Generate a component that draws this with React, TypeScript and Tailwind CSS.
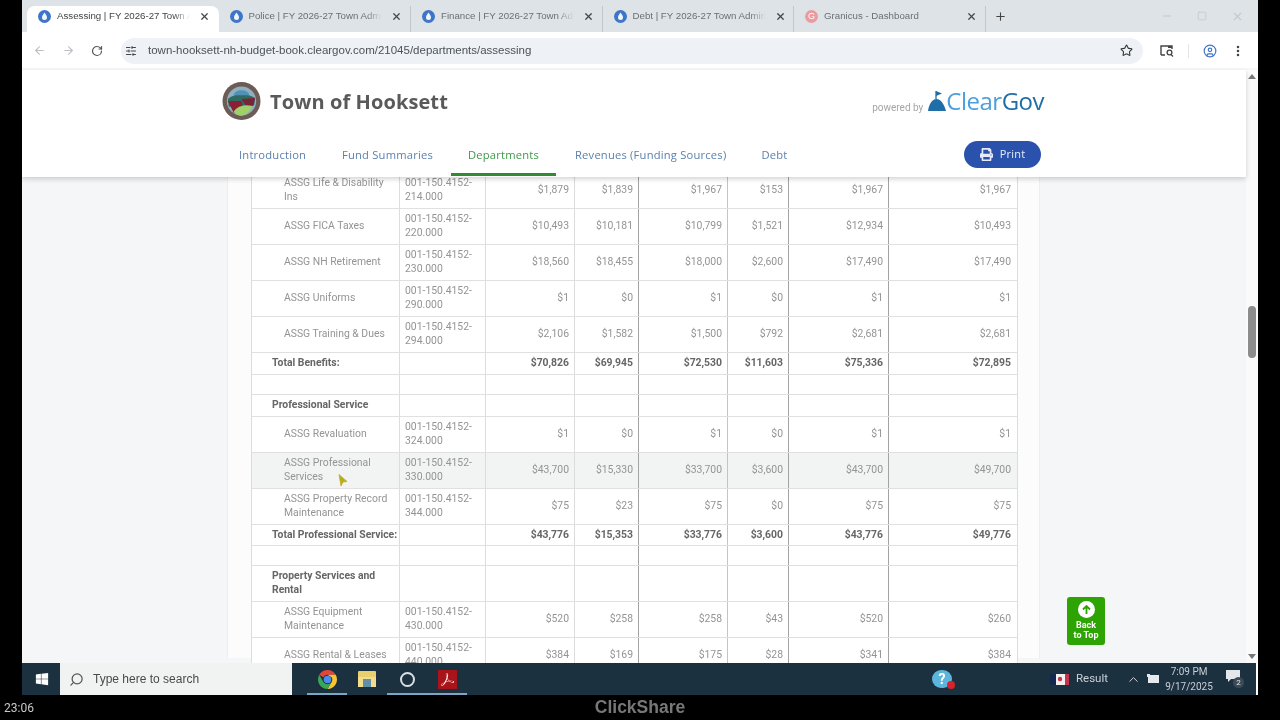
import React from "react";
import { ArrowLeft, ArrowRight, ChevronUp, CircleUser, Minus, MoreVertical, Plus, RotateCw, Search, SlidersHorizontal, Square, Star, X } from "lucide-react";
import { FaPrint, FaWindows } from "react-icons/fa";
import { SiAdobeacrobatreader } from "react-icons/si";

const tabs = [
  { title: "Assessing | FY 2026-27 Town Administrator", active: true },
  { title: "Police | FY 2026-27 Town Administrator" },
  { title: "Finance | FY 2026-27 Town Administrator" },
  { title: "Debt | FY 2026-27 Town Administrator" },
  { title: "Granicus - Dashboard", granicus: true },
];

type Row = {
  h: string;
  label?: string;
  code?: string;
  values?: string[];
  kind?: "item" | "total" | "heading" | "blank";
  hover?: boolean;
};

const rows: Row[] = [
  { h: "h-[36px]", label: "ASSG Life & Disability Ins", code: "214.000", values: ["$1,879", "$1,839", "$1,967", "$153", "$1,967", "$1,967"] },
  { h: "h-[36px]", label: "ASSG FICA Taxes", code: "220.000", values: ["$10,493", "$10,181", "$10,799", "$1,521", "$12,934", "$10,493"] },
  { h: "h-[36px]", label: "ASSG NH Retirement", code: "230.000", values: ["$18,560", "$18,455", "$18,000", "$2,600", "$17,490", "$17,490"] },
  { h: "h-[36px]", label: "ASSG Uniforms", code: "290.000", values: ["$1", "$0", "$1", "$0", "$1", "$1"] },
  { h: "h-[36px]", label: "ASSG Training & Dues", code: "294.000", values: ["$2,106", "$1,582", "$1,500", "$792", "$2,681", "$2,681"] },
  { h: "h-[22px]", kind: "total", label: "Total Benefits:", values: ["$70,826", "$69,945", "$72,530", "$11,603", "$75,336", "$72,895"] },
  { h: "h-[20px]", kind: "blank" },
  { h: "h-[22px]", kind: "heading", label: "Professional Service" },
  { h: "h-[36px]", label: "ASSG Revaluation", code: "324.000", values: ["$1", "$0", "$1", "$0", "$1", "$1"] },
  { h: "h-[36px]", label: "ASSG Professional Services", code: "330.000", hover: true, values: ["$43,700", "$15,330", "$33,700", "$3,600", "$43,700", "$49,700"] },
  { h: "h-[36px]", label: "ASSG Property Record Maintenance", code: "344.000", values: ["$75", "$23", "$75", "$0", "$75", "$75"] },
  { h: "h-[21px]", kind: "total", label: "Total Professional Service:", values: ["$43,776", "$15,353", "$33,776", "$3,600", "$43,776", "$49,776"] },
  { h: "h-[20px]", kind: "blank" },
  { h: "h-[36px]", kind: "heading", label: "Property Services and Rental" },
  { h: "h-[36px]", label: "ASSG Equipment Maintenance", code: "430.000", values: ["$520", "$258", "$258", "$43", "$520", "$260"] },
  { h: "h-[36px]", label: "ASSG Rental & Leases", code: "440.000", values: ["$384", "$169", "$175", "$28", "$341", "$384"] },
];

const colBorders = ["border-r-[#dcdcdc]", "border-r-[#a3a3a3]", "border-r-[#c4c4c4]", "border-r-[#a3a3a3]", "border-r-[#a3a3a3]", "border-r-[#a3a3a3]"];

function TabIcon({ granicus }: { granicus?: boolean }) {
  if (granicus) {
    return <span className="w-[13px] h-[13px] rounded-full bg-[#eb9aa0] text-white text-[9px] leading-[13px] text-center shrink-0">G</span>;
  }
  return (
    <svg width="13" height="13" viewBox="0 0 13 13" className="shrink-0">
      <circle cx="6.5" cy="6.5" r="6.5" fill="#3f74c9" />
      <path d="M6.5 2.6 C7.6 4.4 9 5.6 9 7.4 A2.5 2.5 0 0 1 4 7.4 C4 5.6 5.4 4.4 6.5 2.6Z" fill="#f2f6fc" />
    </svg>
  );
}

function Seal() {
  return (
    <svg width="39" height="40" viewBox="0 0 40 40" className="shrink-0">
      <circle cx="20" cy="20" r="19.5" fill="#6d5c55" />
      <circle cx="20" cy="20" r="15" fill="#8fb0bf" />
      <path d="M6 18 C12 12 26 11 34 17 L33 24 L7 26Z" fill="#2f6b62" />
      <path d="M6 20 L20 20 L22 30 L12 32Z" fill="#8b1f33" />
      <path d="M20 18 L34 17 L32 25 L24 24Z" fill="#7a2438" />
      <path d="M12 31 C16 24 24 24 31 25 C29 31 24 35 19 35 C16 35 14 33 12 31Z" fill="#9fd06a" />
      <path d="M12 14 a8 5 0 0 1 16 0Z" fill="#4e93b5" />
    </svg>
  );
}

function ChromeIcon() {
  return (
    <svg width="19" height="19" viewBox="0 0 20 20">
      <path d="M10 0 A10 10 0 0 1 18.66 5 L10 5 A5 5 0 0 0 5.67 7.5 L1.34 5 A10 10 0 0 1 10 0Z" fill="#e2453c" />
      <path d="M18.66 5 A10 10 0 0 1 10 20 L14.33 12.5 A5 5 0 0 0 14.33 7.5 L10 5Z" fill="#f7c531" />
      <path d="M1.34 5 L5.67 12.5 A5 5 0 0 0 14.33 12.5 L10 20 A10 10 0 0 1 1.34 5Z" fill="#3aa757" />
      <circle cx="10" cy="10" r="4" fill="#4a8bf0" />
    </svg>
  );
}

function FolderIcon() {
  return (
    <svg width="18" height="16" viewBox="0 0 18 16">
      <rect x="0" y="0" width="18" height="16" rx="1" fill="#e9cf6e" />
      <rect x="0" y="6" width="18" height="10" fill="#f1dd8b" />
      <rect x="5" y="8" width="8" height="8" fill="#5f90a8" />
    </svg>
  );
}

function ClearGovFlag() {
  return (
    <svg width="18" height="21" viewBox="0 0 18 21" className="shrink-0 mb-[2px]">
      <path d="M8 0 L8 8" stroke="#1f6ea8" strokeWidth="1.3" />
      <path d="M8 0 L14 2.5 L8 5Z" fill="#1f6ea8" />
      <path d="M0 20 C1 13 4 8 8.5 8 C13 8 16 13 18 20Z" fill="#1f6ea8" />
    </svg>
  );
}

function Cursor() {
  return (
    <svg width="10" height="13" viewBox="0 0 10 13" className="absolute left-[316px] top-[297px]">
      <path d="M1 0.5 L9 7.5 L5 8 L3 12 Z" fill="#a8b41e" stroke="#d8a520" strokeWidth="0.8" />
    </svg>
  );
}

function BudgetRow({ row }: { row: Row }) {
  const line = "border-b border-b-[#e0e0e0]";
  const bg = row.hover ? "bg-[#f2f3f3]" : "";
  const bold = row.kind === "total" || row.kind === "heading";
  const valueCls = bold ? "font-bold text-[#666]" : "text-[#949494]";
  const vals = row.values ?? ["", "", "", "", "", ""];
  return (
    <tr className={`${row.h} ${bg}`}>
      <td className={`${line} border-r border-r-[#dcdcdc] border-l border-l-[#dcdcdc] leading-[14px] ${bold ? "pl-[20px] font-bold text-[#666]" : "pl-[32px] pr-[6px] text-[#949494]"} ${row.kind === "total" ? "whitespace-nowrap" : ""}`}>
        {row.label}
      </td>
      <td className={`${line} border-r border-r-[#dcdcdc] pl-[5px] leading-[14px] text-[#949494]`}>
        {row.code && (
          <>
            001-150.4152-
            <br />
            {row.code}
          </>
        )}
      </td>
      {vals.map((v, i) => (
        <td key={i} className={`${line} border-r ${i === 5 ? "border-r-[#dcdcdc] pr-[6px]" : `${colBorders[i]} pr-[5px]`} text-right ${valueCls}`}>
          {v}
        </td>
      ))}
    </tr>
  );
}

export default function App() {
  return (
    <div className="w-[1280px] h-[720px] bg-black overflow-hidden flex flex-col relative blur-[0.6px] font-['Roboto',sans-serif]">
      <div className="flex h-[695px]">
        <div className="w-[22px] bg-black" />
        <div className="w-[1236px] flex flex-col bg-white relative">
          {/* tab strip */}
          <div className="h-[32px] bg-[#dee3e8] flex items-end pl-[5px] text-[9.7px] font-['Liberation_Sans',sans-serif] shrink-0">
            {tabs.map((t, i) => (
              <div
                key={t.title}
                className={`w-[191.5px] h-[26px] flex items-center pl-[11px] pb-[6px] shrink-0 ${t.active ? "bg-white rounded-t-[8px] text-[#444]" : `text-[#6b6f73] ${i > 1 ? "border-l border-l-[#c2c7cc]" : ""}`}`}
              >
                <TabIcon granicus={t.granicus} />
                <span className="ml-[6px] w-[133px] overflow-hidden whitespace-nowrap [mask-image:linear-gradient(to_right,black_88%,transparent)]">{t.title}</span>
                <X size={11} strokeWidth={2.6} className="ml-[9px] text-[#444] shrink-0" />
              </div>
            ))}
            <div className="h-[26px] flex items-center pl-[8px] pb-[6px] border-l border-l-[#c2c7cc]">
              <Plus size={13} strokeWidth={2} className="text-[#444]" />
            </div>
            <div className="ml-auto h-[32px] flex items-center gap-[24px] pr-[14px] text-[#c4c9ce]">
              <Minus size={12} />
              <Square size={10} />
              <X size={13} />
            </div>
          </div>

          {/* address bar */}
          <div className="h-[38px] bg-white flex items-center pl-[10px] pr-[10px] pt-[1px] shrink-0 border-b-[2px] border-b-[#f7f8f9]">
            <ArrowLeft size={13} className="text-[#bcbfc3] ml-[1px]" />
            <ArrowRight size={13} className="text-[#bcbfc3] ml-[16px]" />
            <RotateCw size={12} strokeWidth={2.4} className="text-[#555] ml-[16px] mr-[1px]" />
            <div className="ml-[17px] w-[1022px] h-[26px] rounded-full bg-[#eef2f7] flex items-center pl-[4px] pr-[10px]">
              <SlidersHorizontal size={12} className="text-[#444]" />
              <span className="ml-[11px] text-[11.5px] text-[#4c5258] font-['Liberation_Sans',sans-serif]">town-hooksett-nh-budget-book.cleargov.com/21045/departments/assessing</span>
              <Star size={13} strokeWidth={2} className="ml-auto text-[#333]" />
            </div>
            <svg width="14" height="13" viewBox="0 0 14 13" className="ml-[17px] shrink-0">
              <path d="M1 11 V2 H12 V5 M1 11 H5" fill="none" stroke="#444" strokeWidth="1.4" />
              <rect x="8" y="2" width="4" height="2" fill="#444" />
              <circle cx="9.5" cy="8.5" r="2.4" fill="none" stroke="#444" strokeWidth="1.3" />
              <path d="M11 10.5 L13 12.5" stroke="#444" strokeWidth="1.3" />
            </svg>
            <div className="w-px h-[14px] bg-[#e3e5e8] ml-[14px]" />
            <CircleUser size={14} strokeWidth={2} className="ml-[14px] text-[#3f74c9]" />
            <MoreVertical size={14} strokeWidth={2.4} className="ml-[14px] text-[#444]" />
          </div>

          {/* page */}
          <div className="flex-1 flex min-h-0 relative">
            <div className="flex-1 flex flex-col min-w-0 bg-[#f4f6f8] relative">
              <header className="h-[107px] bg-white shadow-[0_2px_5px_rgba(0,0,0,0.18)] relative z-10 shrink-0 pl-[200px] pr-[201px] flex flex-col">
                <div className="flex items-center h-[62px]">
                  <Seal />
                  <span className="ml-[9px] mt-[2px] text-[20px] font-bold text-[#5a5a5a] tracking-[0.1px] font-['Open_Sans',sans-serif]">Town of Hooksett</span>
                  <span className="ml-auto mt-[13px] text-[10px] text-[#a5a5a5]">powered by</span>
                  <span className="ml-[5px] mr-[1px] flex items-end">
                    <ClearGovFlag />
                    <span className="text-[24px] leading-[26px] font-medium font-['Open_Sans',sans-serif] tracking-[-0.5px] text-[#4a9fdc]">
                      Clear<span className="text-[#1f6ea8]">Gov</span>
                    </span>
                  </span>
                </div>
                <nav className="flex items-stretch h-[45px] pl-[17px] pr-[4px] text-[11.2px] tracking-[0.2px] text-[#5c80ad] font-['Open_Sans',sans-serif]">
                  <span className="self-center mt-[2px] w-[68px]">Introduction</span>
                  <span className="self-center mt-[2px] ml-[35px] w-[94px] whitespace-nowrap">Fund Summaries</span>
                  <span className="ml-[15px] w-[105px] mb-[1px] pt-[5px] flex items-center justify-center border-b-[3px] border-b-[#2f8c35] text-[#3f9a49]">Departments</span>
                  <span className="self-center mt-[2px] ml-[19px] whitespace-nowrap">Revenues (Funding Sources)</span>
                  <span className="self-center mt-[2px] ml-[35px]">Debt</span>
                  <span className="self-center ml-auto w-[77px] h-[27px] rounded-full bg-[#2a52ad] flex items-center justify-center gap-[7px] text-[#e6ecf7] text-[11px]">
                    <FaPrint size={13} />
                    Print
                  </span>
                </nav>
              </header>

              <div className="flex-1 min-h-0 overflow-hidden pl-[205px] relative">
                <div className="w-[813px] h-full bg-[#fcfcfc] border-x border-x-[#eeeeee] pl-[23px]">
                  <table className="table-fixed border-collapse w-[766px] -mt-[5px] bg-white text-[10.4px] leading-[14px]">
                    <colgroup>
                      <col className="w-[148px]" />
                      <col className="w-[86px]" />
                      <col className="w-[89px]" />
                      <col className="w-[64px]" />
                      <col className="w-[89px]" />
                      <col className="w-[61px]" />
                      <col className="w-[100px]" />
                      <col className="w-[129px]" />
                    </colgroup>
                    <tbody>
                      {rows.map((r, i) => (
                        <BudgetRow key={i} row={r} />
                      ))}
                    </tbody>
                  </table>
                </div>
                <Cursor />
                <div className="absolute left-[1045px] top-[420px] w-[38px] h-[48px] rounded-[3px] bg-[#2ea304] flex flex-col items-center pt-[4px] text-white text-[9px] leading-[10px] font-bold text-center">
                  <span className="w-[17px] h-[17px] rounded-full bg-white flex items-center justify-center mb-[2px]">
                    <ArrowUpSmall />
                  </span>
                  Back
                  <br />
                  to Top
                </div>
              </div>
            </div>

            {/* scrollbar */}
            <div className="w-[12px] bg-[#fafafa] flex flex-col items-center relative">
              <span className="mt-[4px] w-0 h-0 border-x-[4px] border-x-transparent border-b-[5px] border-b-[#777]" />
              <span className="mt-[227px] w-[8px] h-[52px] rounded-full bg-[#8c8c8c]" />
              <span className="mt-auto mb-[4px] w-0 h-0 border-x-[4px] border-x-transparent border-t-[5px] border-t-[#777]" />
            </div>
          </div>

          {/* taskbar */}
          <div className="h-[32px] shrink-0 bg-[#1c3140] flex items-center text-[#d7dde2] mr-[2px]">
            <div className="w-[38px] flex justify-center shrink-0">
              <FaWindows size={14} className="text-white ml-[2px]" />
            </div>
            <div className="w-[232px] h-full bg-[#f1f2f2] flex items-center pl-[9px] text-[#4a4a4a] shrink-0">
              <Search size={15} className="-scale-x-100 text-[#555]" />
              <span className="ml-[9px] text-[12px] font-['Liberation_Sans',sans-serif]">Type here to search</span>
            </div>
            <div className="ml-[15px] flex h-full shrink-0">
              <TaskIcon underline><ChromeIcon /></TaskIcon>
              <TaskIcon><FolderIcon /></TaskIcon>
              <TaskIcon underline><span className="w-[15px] h-[15px] rounded-full border-2 border-[#d9dfe3]" /></TaskIcon>
              <TaskIcon underline>
                <span className="w-[19px] h-[19px] bg-[#a8141a] flex items-center justify-center">
                  <SiAdobeacrobatreader size={13} className="text-white" />
                </span>
              </TaskIcon>
            </div>

            <div className="ml-[465px] relative w-[20px] h-[18px] shrink-0">
              <span className="absolute inset-0 rounded-full bg-[#5cb6dc] text-white text-[14px] leading-[18px] font-bold text-center">?</span>
              <span className="absolute right-[-3px] bottom-[-1px] w-[8px] h-[8px] rounded-full bg-[#d8232a]" />
            </div>

            <svg width="19" height="11" viewBox="0 0 19 11" className="ml-[98px] shrink-0">
              <rect width="19" height="11" rx="1" fill="#f1f1f1" />
              <rect width="6" height="11" fill="#12284c" />
              <rect x="15" width="4" height="11" fill="#c8324a" />
              <circle cx="10" cy="5" r="2.2" fill="#c8324a" />
            </svg>
            <span className="ml-[7px] text-[11.5px] text-[#c9d0d6]">Result</span>
            <ChevronUp size={15} strokeWidth={1.6} className="ml-[18px] text-[#cdd3d8] shrink-0" />
            <svg width="13" height="10" viewBox="0 0 13 10" className="ml-[6px] shrink-0">
              <rect x="1" y="1" width="11" height="8" fill="#e6eaed" />
              <rect x="0" y="0" width="3" height="3" fill="#e6eaed" />
            </svg>
            <div className="w-[58px] shrink-0 text-center text-[10px] leading-[15px] text-[#c7ced4]">
              7:09 PM
              <br />
              9/17/2025
            </div>
            <div className="ml-[8px] relative shrink-0 w-[18px] h-[18px]">
              <svg width="14" height="13" viewBox="0 0 14 13" className="absolute left-0 top-0">
                <path d="M0 0 H14 V9 H5 L2 12 V9 H0Z" fill="#e3e7ea" />
              </svg>
              <span className="absolute right-0 bottom-0 w-[11px] h-[11px] rounded-full bg-[#3b4a55] text-[8px] leading-[11px] text-center text-[#e3e7ea]">2</span>
            </div>
          </div>
        </div>
        <div className="flex-1 bg-black" />
      </div>

      {/* left edge sliver */}
      <div className="absolute left-[22px] top-[102px] w-[5px] h-[61px] bg-[#8c1c24]" />

      {/* meeting strip */}
      <div className="flex-1 bg-black relative flex items-center pl-[4px] text-[12px] text-[#c9c9c9]">
        23:06
        <span className="absolute left-0 right-0 text-center text-[17.5px] font-bold text-[#777] font-['Liberation_Sans',sans-serif]">ClickShare</span>
      </div>
    </div>
  );
}

function ArrowUpSmall() {
  return (
    <svg width="11" height="11" viewBox="0 0 11 11">
      <path d="M5.5 10 V2 M2 5.5 L5.5 2 L9 5.5" fill="none" stroke="#2ea304" strokeWidth="1.8" />
    </svg>
  );
}

function TaskIcon({ children, underline }: { children: React.ReactNode; underline?: boolean }) {
  return (
    <div className={`w-[40px] h-full flex items-center justify-center ${underline ? "border-b-[2px] border-b-[#7ba6c4] pt-[2px]" : ""}`}>
      {children}
    </div>
  );
}
